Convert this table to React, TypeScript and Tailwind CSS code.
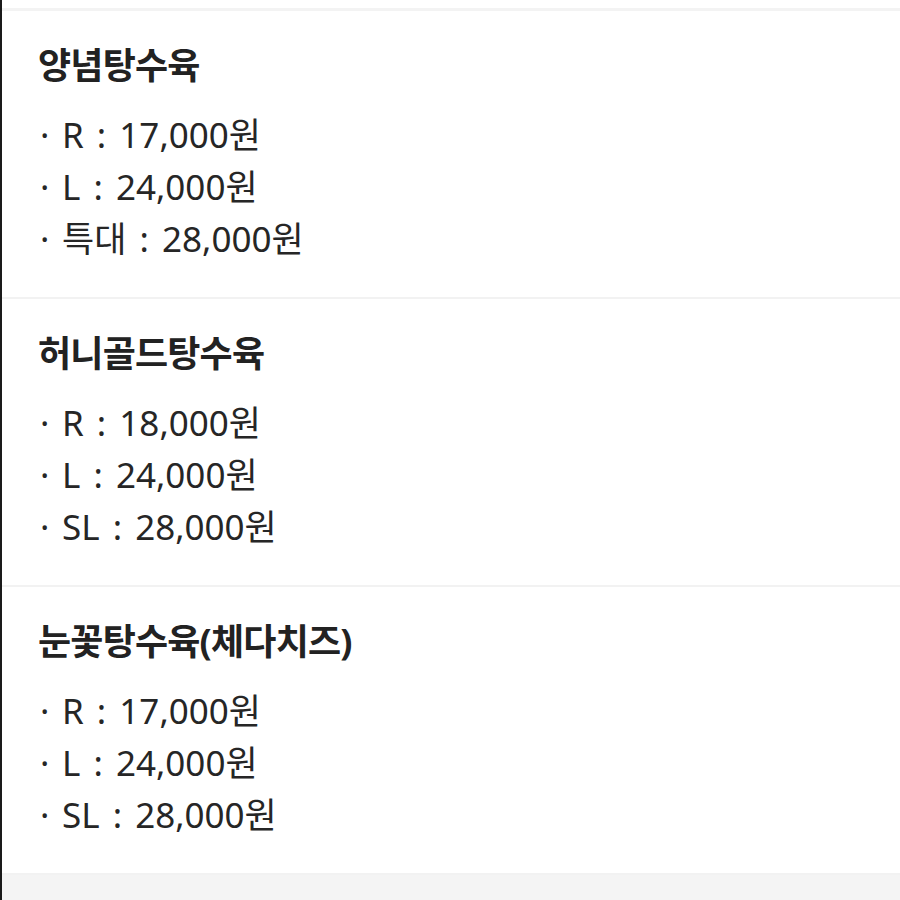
import React from "react";

const menus = [
  {
    name: "양념탕수육",
    prices: ["R : 17,000원", "L : 24,000원", "특대 : 28,000원"],
  },
  {
    name: "허니골드탕수육",
    prices: ["R : 18,000원", "L : 24,000원", "SL : 28,000원"],
  },
  {
    name: "눈꽃탕수육(체다치즈)",
    prices: ["R : 17,000원", "L : 24,000원", "SL : 28,000원"],
  },
];

export default function App() {
  return (
    <div
      className="w-[900px] h-[900px] overflow-hidden bg-[#f4f4f4] border-l-2 border-[#1a1a1a]"
      style={{ fontFamily: '"Noto Sans", "Noto Sans CJK KR", sans-serif' }}
    >
      <div className="bg-white pt-[8px]">
        <div className="border-t-[3px] border-[#f3f3f3]">
          {menus.map((menu) => (
            <div key={menu.name} className="pl-[36px] pr-[38px] pt-[33px] pb-[32px] border-b-2 border-[#f2f2f2]">
              <h3 className="text-[36px] leading-[44px] font-bold tracking-[-0.8px] text-[#222]">{menu.name}</h3>
              <ul className="mt-[21px] text-[35px] leading-[52px] text-[#262626] [word-spacing:4px]">
                {menu.prices.map((p) => (
                  <li key={p} className="flex">
                    <span className="w-[24px] pl-[2px]">·</span>
                    <span>{p}</span>
                  </li>
                ))}
              </ul>
            </div>
          ))}
        </div>
      </div>
    </div>
  );
}
